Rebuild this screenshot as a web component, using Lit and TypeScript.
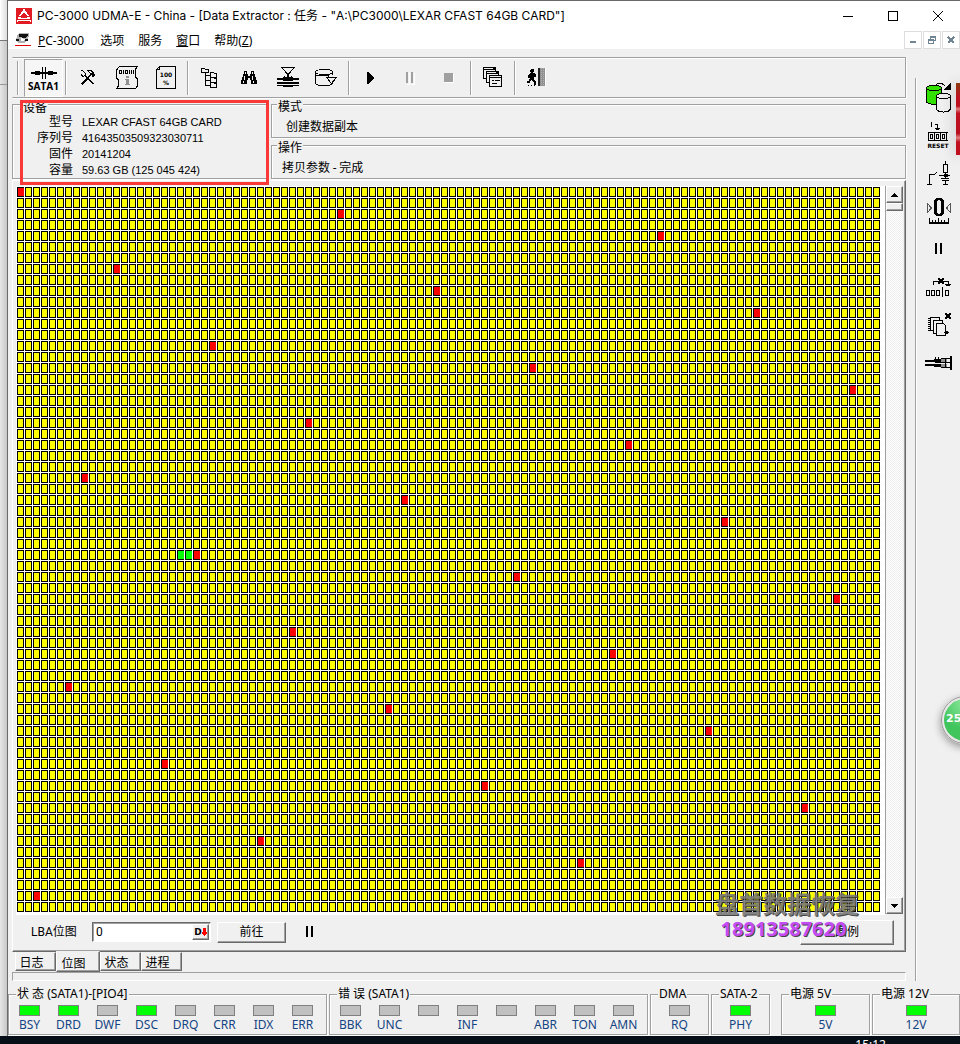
import { LitElement, html, css, svg } from "lit";
import { customElement } from "lit/decorators.js";
import { classMap } from "lit/directives/class-map.js";

const icon = (w: number, h: number, body: unknown) => html`
  <svg class="icon" width=${w} height=${h} viewBox="0 0 ${w} ${h}" aria-hidden="true">${body}</svg>
`;

const ICONS = {
  sata: icon(26, 12, svg`
    <path d="M0 5h26v2H0zM4 4h5v4H4zM17 4h5v4h-5z" fill="#000"/>
    <path d="M11 0h4v12h-4z" fill="#f0f0f0"/><path d="M11 0h1v12h-1zM14 0h1v12h-1zM9 5h8v2H9z" fill="#000"/>`),
  tools: icon(15, 15, svg`
    <path d="M1 1h2v1h1v1h1v2H4v1H3V5H2V4H1v2h1v1h2V6h1v1h1v1h1v1h1v1h1v1h1v1h1v1h1v1h2v-1h-1v-1h-1v-1h-1v-1h-1V9h-1V8H8V7H7V6H6V3H5V2H4V1H3V0H1z" fill="#000"/>
    <path d="M8 0h4v1h1v1h1v2h1v2h-1v1h-2V5h-1V4h-1v1H9v1H8v1H7v1H6v1H5v1H4v1H3v1H2v1H1v1h1v1h1v-1h1v-1h1v-1h1v-1h1v-1h1V8h1V7h1V6h1V4h-1V3H9V2H8V1H7V0z" fill="#000"/>
    <path d="M9 1h2v1h1v1h-2V2H9z" fill="#f0f0f0"/>`),
  scroll: icon(22, 23, svg`
    <path d="M3.500 .5h18l-2 2.500v8l2 2v7l-2 2.500H.5L2.500 20v-6L.5 12V4z" fill="#f0f0f0" class="k"/>
    <g class="k" fill="none"><rect x="3.500" y="4.500" width="2" height="3"/><path d="M7.500 4v4"/><rect x="9.500" y="4.500" width="2" height="3"/><path d="M13.500 4v4M15.500 4v4M17.500 4v4"/></g>
    <path d="M10 10h3v2h-3zM9 13h4v5h1v1H9v-1h1v-4H9z" fill="#909090"/>`),
  doc: icon(20, 23, svg`
    <path d="M3.500 .5h15.500v22H.5V3.500zM.5 3.500h3v-3" class="k"/>
    <text x="10" y="11" text-anchor="middle" class="tiny small">100</text>
    <text x="10" y="19" text-anchor="middle" class="tiny small">%</text>`),
  tree: icon(17, 20, svg`
    <path d="M.5.500h3l1 1h3v3h-7zM4.500 5v12.500h4M4.500 7.500h5M4.500 12.500h5" class="k"/>
    <path d="M9.500 4.500h3l1 1h2v4h-6zM9.500 9.500h3l1 1h2v4h-6zM9.500 14.500h3l1 1h2v3.500h-6z" class="k"/>
    <path d="M15 6h1v14h-5v-1h4z" fill="#000"/>`),
  find: icon(16, 14, svg`
    <path d="M3 0h3v3h1v2h2V3h1V0h3v3h1v3h1v3h1v4h-6V9H9V7H7v2H6v4H0V9h1V6h1V3h1z" fill="#000"/>
    <path d="M4 1h1v2H4zM11 1h1v2h-1zM3 5h1v4H3zM11 5h1v4h-1zM2 10h1v2H2zM12 10h1v2h-1z" fill="#f0f0f0"/>`),
  press: icon(22, 21, svg`
    <path d="M4.500 .5h13L11 7.500z" fill="none" stroke="#000"/>
    <path d="M10 8h2v2h-2zM7 9h1v2H7zM14 9h1v2h-1zM0 11h22v2H0zM6 10h10v4H6zM0 15h22v2H0zM6 18h10v2H6zM0 18h22v1H0z" fill="#000"/>`),
  disk: icon(23, 18, svg`
    <path d="M.5 3v11.500C2 17.500 15 17.500 17 14.500V13M17.500 6V3" class="s"/><ellipse cx="9" cy="3" rx="8.500" ry="2.500" class="s"/>
    <path d="M1 6h12v3M11.500 8.500h10l-5 6z" class="s"/>`),
  play: icon(7, 12, svg`<path d="M0 0h1l6 5v2l-6 5H0z" fill="#000"/>`),
  pauseOff: icon(8, 12, svg`<path d="M2 1h1v11H1M8 1v11H6" stroke="#fff" fill="none"/><path d="M0 0h2v11H0zM5 0h2v11H5z" fill="#a0a0a0"/>`),
  stop: icon(10, 10, svg`<path d="M1 1h9v9H1z" fill="#fff"/><path d="M0 0h9v9H0z" fill="#a0a0a0"/>`),
  windows: icon(20, 21, svg`
    <g fill="#f0f0f0" class="k"><path d="M.5.500h12v11H.5z"/><path d="M3.500 4.500h12v11h-12z"/><path d="M6.500 8.500h12v11h-12z"/></g>
    <path d="M0 0h13v1H0zM10 1h3v2h-3zM3 4h13v1H3zM13 5h3v2h-3zM6 8h13v1H6zM0 2h10v1H0zM3 6h10v1H3zM6 10h13v1H6z" fill="#000"/><path d="M9 13.500h2M12 13.500h5M9 16.500h5" class="k"/>`),
  exit: icon(20, 19, svg`
    <path d="M4 1h3v3H6v1h1l2 2v2H7v3l2 2v3H7v-3l-3-2-1 3H0v-2h2l1-3V9L2 10H1V7l3-2V4H3V2zM1 17h1v1H1zM4 17h1v1H4zM7 17h1v1H7z" fill="#000"/>
    <path d="M11 0h7v18h-7z" fill="#909090"/><path d="M11 0h2v18h-2z" fill="#222"/><path d="M14.500 0v18M16.500 0v18" stroke="#b4b4b4" stroke-dasharray="1 1"/><path d="M18.500 0v18" stroke="#fff"/>`),
  copyDisk: icon(26, 31, svg`
    <path d="M.5 6v14c2 3 13 3 15 0V6" fill="#32e100" class="s"/><ellipse cx="8" cy="6" rx="7.500" ry="2.500" fill="#32e100" class="s"/>
    <path d="M10.500 14v13c2 4 12 4 14 0V14" fill="#f0f0f0" class="s"/><ellipse cx="17.500" cy="14" rx="7" ry="2.500" fill="#f0f0f0" class="s"/>
    <path d="M9 3.500C12 .5 16 .5 19 4" class="s"/><path d="M25 0v8h-8z" fill="#000"/>`),
  reset: icon(21, 27, svg`
    <path d="M3.500 0v5M2.500 1.500h1M6.500 2.500h3v5M7 6.500h5M8 7.500h3" class="k"/>
    <path d="M20 10.500H.5v8H20M6.500 10v9M12.500 10v9M18.500 10v9" class="k"/>
    <g class="k" fill="none"><rect x="2.500" y="12.500" width="2" height="4"/><rect x="8.500" y="12.500" width="2" height="4"/><rect x="14.500" y="12.500" width="2" height="4"/></g>
    <text x="10" y="26" text-anchor="middle" class="tiny small">RESET</text>`),
  circuit: icon(24, 24, svg`
    <path d="M0 23.500h5M2.500 23V13.500h5M7 14l3-3M12 14.500h11M18.500 0v3M16.500 3.500h4v8h-4zM18.500 12v5M14 17.500h8M15 19.500h7M18.500 20v4M16 23.500h5" class="k"/><path d="M17 13h4v3h-4z" fill="#000"/>`),
  zero: icon(24, 27, svg`
    <path d="M.5 5.500v9l4-4.500zM23.500 5.500v9l-4-4.500z" fill="none" stroke="#555"/>
    <path d="M9 0h6v1h1v1h1v14h-1v1h-1v1H9v-1H8v-1H7V2h1V1h1zM11 2v1h-1v12h1v1h2v-1h1V3h-1V2z" fill="#000" fill-rule="evenodd"/>
    <path d="M2 24h20v2H2zM2 20h1v4H2zM5 22h1v2H5zM8 22h1v2H8zM11 20h1v4h-1zM14 22h1v2h-1zM17 22h1v2h-1zM21 20h1v4h-1z" fill="#000"/>`),
  pause: icon(8, 12, svg`<path d="M0 0h2v11H0zM5 0h2v11H5z" fill="#000"/>`),
  skip: icon(26, 19, svg`
    <path d="M.5 12.500h3v5h-3zM5.500 12.500h3v5h-3zM10.500 12.500h3v5h-3zM16.500 9v10M19.500 12.500h3v5h-3zM7.500 7V3.500H22V8M19 6.500h6M20 7.500h4" class="k"/>
    <path d="M12 0h2v1h2V0h2v2h-1v2h1v2h-2V5h-2v1h-2V4h1V2h-1z" fill="#000"/>`),
  sheets: icon(24, 24, svg`
    <g fill="#f0f0f0" class="k"><path d="M3.500 4.500h9v13h-9z"/><path d="M6.500 7.500h9v13h-9z"/><path d="M9.500 10.500h7l2 2v10h-9z"/></g>
    <path d="M1 5.500h3M1 7.500h3M1 9.500h3M1 11.500h3M1 13.500h3M1 15.500h3M1 17.500h3M17 19.500h5" class="k"/>
    <path d="M18 0h2v1h2V0h2v2h-1v2h1v2h-2V5h-2v1h-2V4h1V2h-1zM18 18h3v3h-3z" fill="#000"/>`),
  plug: icon(27, 14, svg`
    <path d="M0 4h10v2H0zM0 8h10v2H0zM9 3h7v3H9zM9 8h7v3H9zM10 1h1v2h-1zM13 1h1v2h-1z" fill="#000"/>
    <path d="M16 3h6v3h-6zM16 8h6v3h-6z" fill="#909090"/><path d="M16 2.500h9M16 11.500h9M10 6.500h15M20.500 2v10" class="k"/><path d="M25 0h2v14h-2z" fill="#000"/>`),
};

const BLOCKS = 7128;
const STEP = 256;
const HEAD = 3584;

const blockState = (i: number) => {
  if (i === HEAD || i === HEAD + 1) return "done";
  return (i < HEAD ? i : i - 2) % STEP === 0 ? "bad" : "";
};

type Lamp = [label: string, on: boolean];
const GROUPS: { title: string; lamps: Lamp[] }[] = [
  { title: "状 态 (SATA1)-[PIO4]", lamps: [["BSY", true], ["DRD", true], ["DWF", false], ["DSC", true], ["DRQ", false], ["CRR", false], ["IDX", false], ["ERR", false]] },
  { title: "错 误 (SATA1)", lamps: [["BBK", false], ["UNC", false], ["", false], ["INF", false], ["", false], ["ABR", false], ["TON", false], ["AMN", false]] },
  { title: "DMA", lamps: [["RQ", false]] },
  { title: "SATA-2", lamps: [["PHY", true]] },
  { title: "电源 5V", lamps: [["5V", true]] },
  { title: "电源 12V", lamps: [["12V", true]] },
];

@customElement("sector-map")
class SectorMap extends LitElement {
  static styles = css`
    :host { display: grid; grid-template-columns: repeat(auto-fill, 7px); grid-auto-rows: 10px; gap: 1px; align-content: start; background: #fff; padding: 1px 0 3px 1px; }
    .block { background: #ff0; border: 1px solid #000; }
    .bad { background: #f00; border-right-width: 0; }
    .done { background: #0f0; border-right-width: 0; }
  `;
  render() {
    return Array.from({ length: BLOCKS }, (_, i) => html`<i class="block ${blockState(i)}"></i>`);
  }
}

@customElement("app-root")
class AppRoot extends LitElement {
  static styles = css`
    :host { display: block; font: 12px/16px "Noto Sans", "Noto Sans CJK SC", sans-serif; color: #000; }
    * { box-sizing: border-box; }
    button { font: inherit; color: inherit; background: none; border: 0; padding: 0; margin: 0; display: flex; align-items: center; justify-content: center; }
    fieldset { min-width: 0; margin: 0; padding: 0; border: 1px solid #a0a0a0; box-shadow: 1px 1px #fff, inset 1px 1px #fff; }
    legend { background: #f0f0f0; padding: 0 1px; }
    .icon { display: block; flex: none; shape-rendering: crispEdges; overflow: visible; }
    .k, .k * { stroke: #000; stroke-width: 1; }
    path.k:not([fill]), g.k:not([fill]) { fill: none; }
    .s { stroke: #000; stroke-width: 1; }
    .s:not([fill]) { fill: none; }
    .tiny { font: bold 7px "DejaVu Sans", sans-serif; }
    .small { font-size: 6px; }

    .desktop { position: relative; overflow: hidden; background: #e3e3e3; display: grid; grid-template-columns: 7px minmax(0, 1fr); }
    .behind { background: linear-gradient(90deg, #e6e6e6, #c8c8c8); display: flex; flex-direction: column; }
    .behind-title { height: 41px; background: linear-gradient(90deg, #fff, #ddd); border-bottom: 1px solid #777; }
    .behind-bar { height: 44px; border-bottom: 1px solid #999; }
    .window { background: #f0f0f0; border-left: 1px solid #696969; border-top: 1px solid #696969; }
    .title { height: 30px; background: #fff; display: flex; align-items: center; padding-left: 8px; }
    .title-text { flex: 1; font: 12px/16px Inter, "Noto Sans CJK SC", sans-serif; margin: 0; padding-left: 5px; white-space: nowrap; }
    .caption { width: 45px; height: 30px; }
    .menu { height: 18px; background: #fff; display: flex; align-items: center; padding-left: 7px; }
    .menu-items { display: flex; flex: 1; gap: 14px; padding: 1px 0 0 7px; white-space: nowrap; }
    .menu-items span:first-child { padding-right: 2px; }
    .mdi { width: 18px; height: 18px; margin-left: 1px; border: 1px solid #ddd; background: #fff; color: #6f8594; }

    .body { display: grid; grid-template-columns: minmax(0, 1fr) 45px; }
    .work { padding: 8px 9px 5px 4px; display: flex; flex-direction: column; }
    .toolbar { height: 41px; border: 1px solid #a0a0a0; border-left-color: #f0f0f0; box-shadow: 1px 1px #fff, inset 0 1px #fff; display: flex; align-items: center; padding-left: 4px; }
    .sep { width: 2px; height: 34px; margin: 0 1px 0 2px; border-left: 1px solid #a0a0a0; border-right: 1px solid #fff; }
    .grip { margin: 0 5px 0 0; }
    .tool { width: 39px; height: 38px; }
    .pressed { flex-direction: column; gap: 2px; border: 1px solid; border-color: #a0a0a0 #fff #fff #a0a0a0; background: #f6f6f6; font: bold 10px/10px "Open Sans", sans-serif; padding-top: 2px; }

    .info { margin-top: 2px; display: grid; grid-template-columns: 256px minmax(0, 1fr); gap: 3px; font: 12px/16px Roboto, "Noto Sans CJK SC", sans-serif; }
    .info legend { height: 9px; line-height: 9px; margin-left: 5px; padding-top: 3px; }
    .device { position: relative; }
    .device .device-legend { margin-left: 9px; padding-top: 4px; }
    .mark { position: absolute; inset: -9px -2px -7px 7px; border: 3px solid #fb3838; pointer-events: none; }
    .facts { margin: 0; padding-top: 5px; display: grid; grid-template-columns: 60px 1fr; column-gap: 9px; }
    .facts dt { text-align: right; }
    .facts dd { margin: 0; font-family: "Liberation Sans", sans-serif; font-size: 11px; }
    .modes { display: grid; gap: 2px; }
    .mode { height: 38px; }
    .line { margin: 0; padding: 10px 0 0 14px; }
    .line-op { padding-left: 10px; }

    .panel { margin-top: 1px; border: 1px solid; border-color: #fff #696969 #696969 #fff; box-shadow: inset -1px -1px #a0a0a0; padding: 5px 2px 2px 3px; }
    .view { display: grid; grid-template-columns: minmax(0, 1fr) 18px; }
    .scroll { display: flex; flex-direction: column; border-left: 1px solid #a0a0a0; margin-bottom: 1px; background: repeating-conic-gradient(#fff 0 25%, #eee 0 50%) 0 0 / 2px 2px; }
    .raised { background: #f0f0f0; border: 1px solid; border-color: #fff #696969 #696969 #fff; box-shadow: inset -1px -1px #a0a0a0; }
    .arrow { height: 17px; }
    .thumb { height: 8px; }
    .space { flex: 1; }
    .controls { height: 34px; display: flex; align-items: center; padding: 0 9px 0 15px; font: 12px/16px Roboto, "Noto Sans CJK SC", sans-serif; }
    .lba-label { width: 61px; }
    .field { display: flex; width: 119px; height: 20px; border: 1px solid; border-color: #696969 #fff #fff #696969; box-shadow: inset 1px 1px #a0a0a0; background: #fff; padding: 1px; }
    .lba { flex: 1; min-width: 0; border: 0; background: none; padding: 0 2px; font: inherit; outline: 0; }
    .radix { width: 17px; font: bold 9px/10px "DejaVu Sans", sans-serif; }
    .go { width: 69px; height: 21px; margin: 0 20px 0 6px; }
    .legend-button { width: 94px; height: 25px; margin-left: auto; }
    .tabs { display: flex; padding-left: 3px; height: 20px; align-items: flex-start; font: 12px/16px Roboto, "Noto Sans CJK SC", sans-serif; }
    .tab { height: 19px; width: 41px; border: 1px solid; border-color: #f0f0f0 #696969 #696969 #fff; box-shadow: inset -1px -1px #a0a0a0; background: #f0f0f0; padding: 2px 8px 0 0; }
    .tab.active { height: 21px; width: 44px; margin-top: -1px; padding: 5px 9px 0 0; }
    .strip { height: 9px; border: 1px solid; border-color: #a0a0a0 #fff #fff #a0a0a0; }

    .side { margin-top: 29px; margin-bottom: 5px; border-left: 1px solid #a0a0a0; box-shadow: inset 1px 0 #fff; display: flex; flex-direction: column; }
    .side-tool { height: 38px; width: 45px; }

    .status { display: grid; grid-template-columns: 319fr 319fr 59fr 59fr 98fr 88fr; gap: 2px; padding-bottom: 1px; margin-top: 2px; }
    .status legend { line-height: 12px; margin-left: 7px; }
    .group { height: 47px; display: block; }
    .group:nth-child(5) { margin-left: 9px; }
    .lamps { display: flex; justify-content: center; padding-top: 5px; }
    .row { justify-content: flex-start; padding-left: 1px; }
    .lamp { width: 39px; display: flex; flex-direction: column; align-items: center; color: #144482; }
    .led { width: 21px; height: 11px; border: 1px solid #808080; background: #c0c0c0; margin-bottom: 1px; }
    .on { background: #0f0; }
    .taskbar { grid-column: 1 / -1; height: 8px; background: #050d16; color: #fff; overflow: hidden; text-align: right; padding-right: 74px; line-height: 18px; }

    .ball { position: absolute; right: -29px; top: 696px; width: 48px; height: 48px; border-radius: 50%; border: 3px solid #e8e8e8; outline: 1px solid #999; outline-offset: -1px; background: radial-gradient(circle at 50% 10%, #8be89b, #40c45c 60%); box-shadow: 0 3px 8px #0006; color: #fff; font: bold 11px/40px "DejaVu Sans", sans-serif; padding-left: 2px; }
    .sticker { position: absolute; right: 0; top: 83px; width: 4px; height: 72px; background: linear-gradient(#8a3a10, #c01020 20%, #b80f1e 32%, #e08080 36%, #c01020 42%, #b80f1e 70%, #e08080 76%, #c01020 82%); box-shadow: 0 0 14px #0005; }
    .watermark { position: absolute; right: 101px; top: 890px; text-align: center; pointer-events: none; }
    .wm-name { font: bold 24px/26px "Noto Sans CJK SC", sans-serif; color: #777; text-shadow: 1px 1px #333; margin: 0; opacity: 0.9; }
    .wm-phone { font: bold 20px/26px "Noto Sans", sans-serif; color: #c44cf4; text-shadow: 1px 1px #444; margin: 0 7px 0 0; }
  `;

  private tool(label: string, glyph: unknown) {
    return html`<button class="tool" aria-label=${label}>${glyph}</button>`;
  }

  render() {
    return html`
      <div class="desktop">
        <div class="behind"><div class="behind-title"></div><div class="behind-bar"></div></div>
        <main class="window">
          <header class="title">
            ${icon(16, 16, svg`<path d="M0 0h16v16H0z" fill="#e01b22"/><path d="M7.500 1L3 8h2l3-4 3 4h2L8.500 1zM2 9h12v2H2zM1 12h14v2H1z" fill="#fff"/><path d="M5 9.500h6M2 13h12" stroke="#e01b22"/>`)}
            <h1 class="title-text">PC-3000 UDMA-E - China - [Data Extractor : 任务 - "A:\\PC3000\\LEXAR CFAST 64GB CARD"]</h1>
            <button class="caption" aria-label="最小化">${icon(10, 10, svg`<path d="M0 5.500h10" class="k"/>`)}</button>
            <button class="caption" aria-label="最大化">${icon(10, 10, svg`<path d="M.5.500h9v9h-9z" class="k"/>`)}</button>
            <button class="caption" aria-label="关闭">${icon(10, 10, svg`<path d="M0 0l10 10M10 0L0 10" class="s" shape-rendering="auto"/>`)}</button>
          </header>
          <nav class="menu">
            ${icon(16, 14, svg`<path d="M2 2l3-2h9v3l-2 4-3 3H3L1 8z" fill="#b0b0b0"/><path d="M4 1h9v2l-3 2-6-1zM1 6h3v2H1zM10 6h3v2h-3z" fill="#111"/><path d="M6 5l4 1-1 2H6z" fill="#fff"/><path d="M0 12.500h16" stroke="#e00000"/>`)}
            <div class="menu-items"><span><u>P</u>C-3000</span><span>选项</span><span>服务</span><span><u>窗</u>口</span><span>帮助(<u>Z</u>)</span></div>
            <button class="mdi" aria-label="最小化子窗口">${icon(8, 8, svg`<path d="M1 5h6v2H1z" fill="currentColor"/>`)}</button>
            <button class="mdi" aria-label="还原子窗口">${icon(8, 8, svg`<path d="M2 0h6v5H6V4h1V2H3v1H2zM0 3h6v5H0zM1 5v2h4V5z" fill="currentColor" fill-rule="evenodd"/>`)}</button>
            <button class="mdi" aria-label="关闭子窗口">${icon(8, 8, svg`<path d="M1 1l6 6M7 1L1 7" stroke="currentColor" stroke-width="2"/>`)}</button>
          </nav>

          <div class="body">
            <div class="work">
              <div class="toolbar" role="toolbar">
                <span class="sep grip"></span>
                <button class="tool pressed">${ICONS.sata}SATA1</button>
                <span class="sep"></span>
                ${this.tool("工具", ICONS.tools)}${this.tool("信息", ICONS.scroll)}${this.tool("进度", ICONS.doc)}
                <span class="sep"></span>
                ${this.tool("目录树", ICONS.tree)}${this.tool("查找", ICONS.find)}${this.tool("映射", ICONS.press)}${this.tool("磁盘", ICONS.disk)}
                <span class="sep"></span>
                ${this.tool("开始", ICONS.play)}${this.tool("暂停", ICONS.pauseOff)}${this.tool("停止", ICONS.stop)}
                <span class="sep"></span>
                ${this.tool("窗口", ICONS.windows)}
                <span class="sep"></span>
                ${this.tool("退出", ICONS.exit)}
              </div>

              <section class="info">
                <fieldset class="device">
                  <legend class="device-legend">设备</legend>
                  <dl class="facts">
                    <dt>型号</dt><dd>LEXAR CFAST 64GB CARD</dd>
                    <dt>序列号</dt><dd>41643503509323030711</dd>
                    <dt>固件</dt><dd>20141204</dd>
                    <dt>容量</dt><dd>59.63 GB (125 045 424)</dd>
                  </dl>
                  <div class="mark"></div>
                </fieldset>
                <div class="modes">
                  <fieldset class="mode"><legend>模式</legend><p class="line">创建数据副本</p></fieldset>
                  <fieldset class="mode"><legend>操作</legend><p class="line line-op">拷贝参数 - 完成</p></fieldset>
                </div>
              </section>

              <section class="panel">
                <div class="view">
                  <sector-map></sector-map>
                  <div class="scroll">
                    <button class="raised arrow" aria-label="向上">${icon(7, 4, svg`<path d="M3 0h1v1h1v1h1v1h1v1H0V3h1V2h1V1h1z" fill="#000"/>`)}</button>
                    <div class="raised thumb"></div>
                    <div class="space"></div>
                    <button class="raised arrow" aria-label="向下">${icon(7, 4, svg`<path d="M0 0h7v1H6v1H5v1H4v1H3V3H2V2H1V1H0z" fill="#000"/>`)}</button>
                  </div>
                </div>
                <div class="controls">
                  <label class="lba-label" for="lba">LBA位图</label>
                  <div class="field">
                    <input class="lba" id="lba" value="0" />
                    <button class="raised radix" aria-label="十进制">D${icon(5, 8, svg`<path d="M1 0h3v4h1v1L3 8H2L0 5V4h1z" fill="#f00"/>`)}</button>
                  </div>
                  <button class="raised go">前往</button>
                  ${ICONS.pause}
                  <button class="raised legend-button">图例</button>
                </div>
              </section>

              <div class="tabs" role="tablist">
                ${["日志", "位图", "状态", "进程"].map((t) => html`<button role="tab" class=${classMap({ tab: true, active: t === "位图" })}>${t}</button>`)}
              </div>
              <div class="strip"></div>
            </div>

            <aside class="side">
              ${([["复制", ICONS.copyDisk], ["复位", ICONS.reset], ["电源", ICONS.circuit], ["校准", ICONS.zero], ["暂停", ICONS.pause], ["跳过", ICONS.skip], ["页面", ICONS.sheets], ["接口", ICONS.plug]] as [string, unknown][]).map(
                ([label, glyph]) => html`<button class="side-tool" aria-label=${label}>${glyph}</button>`
              )}
            </aside>
          </div>

          <footer class="status">
            ${GROUPS.map((g) => html`
              <fieldset class="group">
                <legend>${g.title}</legend>
                <div class=${classMap({ lamps: true, row: g.lamps.length > 1 })}>
                  ${g.lamps.map(([label, on]) => html`<div class="lamp"><span class=${classMap({ led: true, on })}></span>${label}</div>`)}
                </div>
              </fieldset>`)}
          </footer>
        </main>
        <div class="taskbar">15:12</div>
        <div class="sticker"></div>
        <div class="ball">25</div>
        <div class="watermark"><p class="wm-name">盘首数据恢复</p><p class="wm-phone">18913587620</p></div>
      </div>
    `;
  }
}
